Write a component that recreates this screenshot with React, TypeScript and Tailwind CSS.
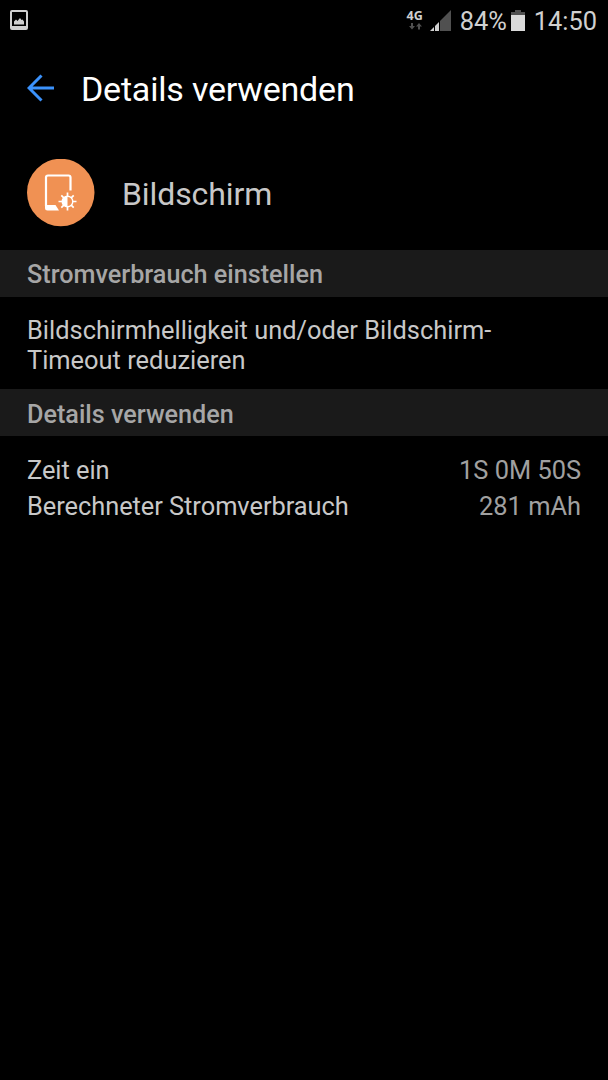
import type { ReactNode } from "react"

const usage = [
  { label: "Zeit ein", value: "1S 0M 50S" },
  { label: "Berechneter Stromverbrauch", value: "281 mAh" },
]

function StatusBar() {
  return (
    <div className="flex h-[42px] items-center justify-between pr-[11px] pl-[9px] text-[#d0d0d0]">
      <svg width="20" height="22" viewBox="0 0 20 22" className="mt-[-2px]">
        <path
          fillRule="evenodd"
          fill="currentColor"
          d="M3 1h14q2 0 2 2v16q0 2-2 2H3q-2 0-2-2V3q0-2 2-2zM3 3v14h14V3z"
        />
        <path fill="currentColor" d="M5 15.500v-3l2-2 1.500 1.500 2.500-3 1.500 2 1-.5 1.500 2v3z" />
      </svg>
      <div className="flex items-center">
        <div className="mt-[-3px] flex w-[18px] flex-col items-center">
          <span className="font-['Open_Sans',sans-serif] text-[12.5px] leading-[14px] font-bold">4G</span>
          <svg width="14" height="7" viewBox="0 0 14 7" fill="#505050">
            <path d="M3 0h2v3h2L4 6.500 1 3h2z" />
            <path d="M10 6.500h2v-3h2L11 0 8 3.500h2z" />
          </svg>
        </div>
        <svg width="21" height="21" viewBox="0 0 21 21" className="mt-[-2px] ml-[6px]">
          <path fill="#d0d0d0" d="M0 21l4-4v4zM5 21v-5l4-4v9z" />
          <path fill="#505050" d="M10 21V11L21 0v21z" />
        </svg>
        <span className="ml-[9px] pt-[2px] text-[25.4px] leading-none">84%</span>
        <svg width="14" height="21" viewBox="0 0 14 21" className="mt-[-2px] ml-[4px]">
          <path fill="#505050" d="M4 0h6v2h4v3H0V2h4z" />
          <path fill="#dadada" d="M0 5h14v16H0z" />
        </svg>
        <span className="ml-[9px] pt-[2px] text-[25.4px] leading-none">14:50</span>
      </div>
    </div>
  )
}

function SectionHeader({ children }: { children: ReactNode }) {
  return (
    <h2 className="flex h-[47px] items-center bg-[#1a1a1a] px-[27px] text-[25.2px] font-medium text-[#a6a6a6]">
      {children}
    </h2>
  )
}

function ScreenIcon() {
  return (
    <svg width="68" height="68" viewBox="0 0 68 68" className="mt-[-1px]">
      <circle cx="33.750" cy="33.500" r="33.750" fill="#f09153" />
      <path d="M19 47V18.500q0-2 2-2h20.500q2 0 2 2v13" fill="none" stroke="#fff" strokeWidth="2.200" />
      <path d="M18 46h10.500l3.500 5.500H20.500q-2.500 0-2.500-2.500z" fill="#fff" />
      <g transform="translate(40.500 42.500)">
        <circle r="5.300" fill="none" stroke="#fff" strokeWidth="1.400" />
        <path d="M0-5.300a5.300 5.300 0 0 0 0 10.600z" fill="#fff" />
        <path
          d="M0-9v4M0 9v-4M-9 0h4M9 0h-4M-6.200-6.200l2.500 2.500M6.200 6.200l-2.500-2.500M-6.200 6.200l2.500-2.500M6.200-6.200l-2.500 2.500"
          stroke="#fff"
          strokeWidth="1.700"
        />
      </g>
    </svg>
  )
}

export default function App() {
  return (
    <div className="h-[1080px] w-[608px] bg-black font-[Roboto,sans-serif] text-[#c8c8c8]">
      <StatusBar />
      <header className="flex h-[94px] items-center pl-[27px] text-white">
        <svg
          width="28"
          height="28"
          viewBox="0 0 28 28"
          fill="none"
          stroke="#3b92fc"
          strokeWidth="3"
          className="mt-[-2px]"
        >
          <path d="M14.500 1.500L2 14l12.500 12.500M2 14h25" />
        </svg>
        <h1 className="ml-[26px] text-[34px] leading-none tracking-[-0.2px]">Details verwenden</h1>
      </header>
      <div className="flex h-[114px] items-center pl-[27px]">
        <ScreenIcon />
        <span className="ml-[27px] pt-[1px] text-[32px] leading-none tracking-[-0.1px]">Bildschirm</span>
      </div>
      <SectionHeader>
        <span className="pt-[3px]">Stromverbrauch einstellen</span>
      </SectionHeader>
      <p className="h-[92px] px-[27px] pt-[18px] text-[25.4px] leading-[30px] tracking-[0.01px]">
        Bildschirmhelligkeit und/oder Bildschirm-
        <br />
        Timeout reduzieren
      </p>
      <SectionHeader>
        <span className="pt-[5px]">Details verwenden</span>
      </SectionHeader>
      <dl className="px-[27px] pt-[16px] text-[25.4px] leading-[36px]">
        {usage.map((row) => (
          <div key={row.label} className="flex justify-between">
            <dt className="tracking-[-0.04px]">{row.label}</dt>
            <dd className="text-[#a0a0a0]">{row.value}</dd>
          </div>
        ))}
      </dl>
    </div>
  )
}
